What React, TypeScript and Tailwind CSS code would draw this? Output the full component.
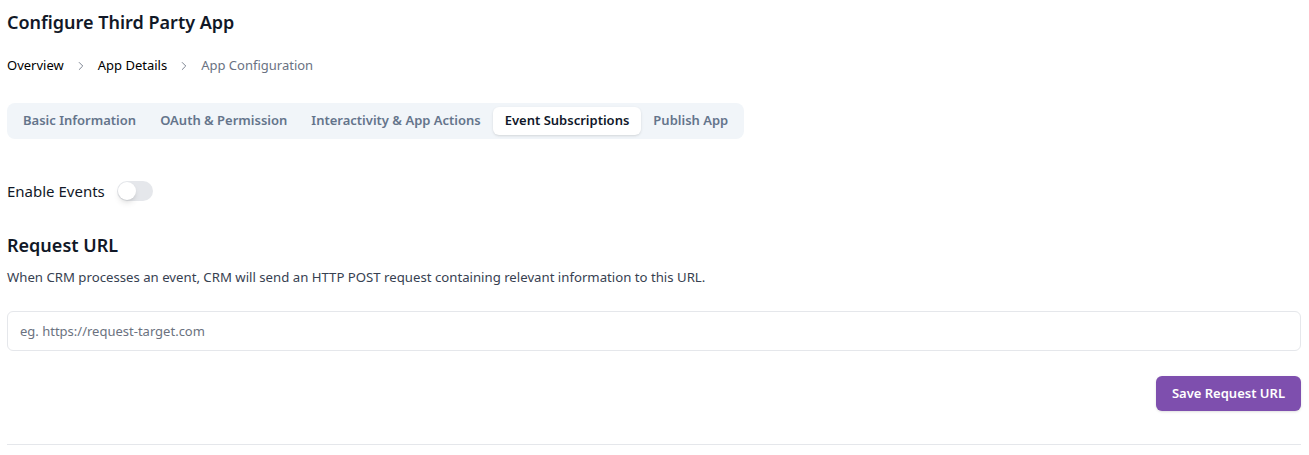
import { ChevronRight } from "lucide-react";

const tabs = [
  "Basic Information",
  "OAuth & Permission",
  "Interactivity & App Actions",
  "Event Subscriptions",
  "Publish App",
];

const App = () => {
  const active = "Event Subscriptions";
  return (
    <div
      className="min-h-screen bg-white pl-[7px] pr-[8px] pt-[10px] text-[#111827]"
      style={{ fontFamily: '"Noto Sans", "Segoe UI", sans-serif' }}
    >
      <h1 className="text-[18px] leading-[24px] font-semibold">Configure Third Party App</h1>

      <nav className="mt-[22px] flex items-center h-5 text-[13px]">
        <span className="text-black">Overview</span>
        <ChevronRight className="mx-[10px] text-gray-500" size={14} strokeWidth={1.5} />
        <span className="text-black">App Details</span>
        <ChevronRight className="mx-[10px] text-gray-500" size={14} strokeWidth={1.5} />
        <span className="text-gray-500">App Configuration</span>
      </nav>

      <div className="mt-[27px] inline-flex items-center rounded-lg bg-[#f1f5f9] p-1">
        {tabs.map((t) => (
          <button
            key={t}
            className={
              t === active
                ? "h-7 rounded-md bg-white px-3 text-[13px] font-semibold text-[#0f172a] shadow-sm"
                : "h-7 rounded-md px-3 text-[13px] font-semibold text-[#64748b]"
            }
          >
            {t}
          </button>
        ))}
      </div>

      <div className="mt-[42px] flex items-center gap-3 h-5">
        <span className="text-[15px] text-[#111827]">Enable Events</span>
        <button className="relative h-5 w-9 rounded-full bg-[#e5e7eb]">
          <span className="absolute left-[1px] top-[1px] h-[18px] w-[18px] rounded-full bg-white shadow-md" />
        </button>
      </div>

      <h2 className="mt-[30px] text-[18px] leading-[28px] font-semibold">Request URL</h2>
      <p className="mt-[8px] text-[13.2px] leading-5 text-[#374151]">
        When CRM processes an event, CRM will send an HTTP POST request containing relevant information to this URL.
      </p>

      <input
        className="mt-[24px] block h-10 w-full rounded-md border border-[#e5e7eb] px-3 text-[13px] outline-none placeholder:text-[#6b7280]"
        placeholder="eg. https://request-target.com"
      />

      <div className="mt-[25px] flex justify-end">
        <button className="h-[35px] rounded-md bg-[#7e4fae] px-4 text-[13px] font-semibold text-white shadow-sm">
          Save Request URL
        </button>
      </div>

      <hr className="mt-[33px] border-t border-[#e5e7eb]" />
    </div>
  );
};

export default App;
